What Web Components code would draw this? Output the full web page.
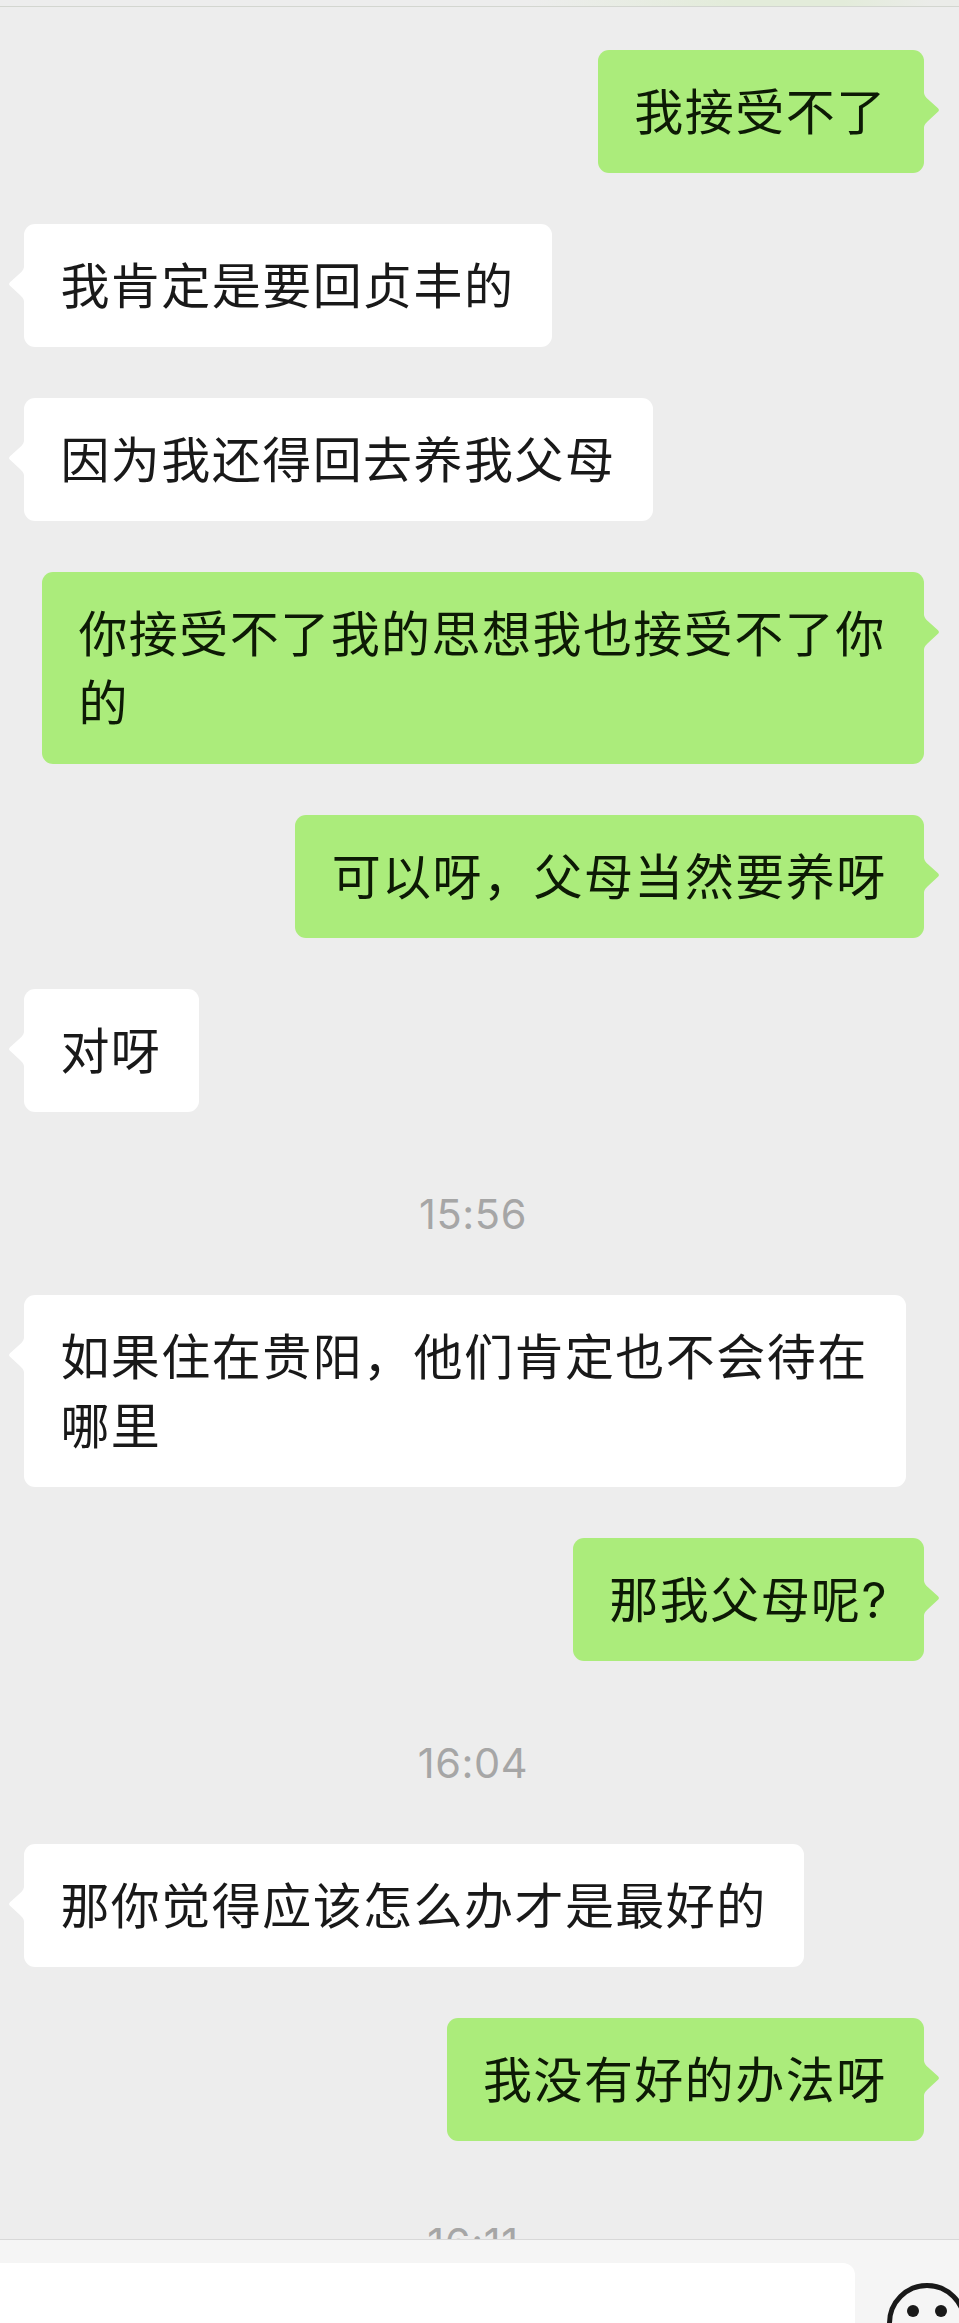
<!DOCTYPE html>
<html lang="zh-CN">
<head>
    <meta charset="UTF-8">
    <meta name="viewport" content="width=device-width, initial-scale=1.0">
    <title>聊天</title>
    <style>
        html,
        body {
            margin: 0;
            padding: 0;
            height: 100%;
            overflow: hidden;
        }

        body {
            font-family: "Noto Sans CJK SC", sans-serif;
            background-color: #ededed;
        }
    </style>
</head>
<body>
    <chat-app></chat-app>

    <script>
        class ChatBubble extends HTMLElement {
            constructor() {
                super();
                this.shadowDOM = this.attachShadow({ mode: "open" });
            }

            connectedCallback() {
                this.render();
            }

            render() {
                this.shadowDOM.innerHTML = `
                    <style>
                        :host {
                            --bubble: #ffffff;
                            position: relative;
                            box-sizing: border-box;
                            align-self: flex-start;
                            max-width: 882px;
                            padding: 24px 37.4px 30px 36.4px;
                            border-radius: 11px;
                            background-color: var(--bubble);
                            color: #191919;
                            font-size: 49px;
                            letter-spacing: 1.45px;
                            line-height: 69px;
                        }

                        :host([mine]) {
                            --bubble: #abec7b;
                            align-self: flex-end;
                            color: #0d1a05;
                        }

                        p {
                            margin: 0;
                        }

                        ::slotted(span) {
                            font-family: Inter, sans-serif;
                            line-height: 1;
                            letter-spacing: 0;
                        }

                        svg {
                            position: absolute;
                            top: 43px;
                            right: 100%;
                            width: 15px;
                            height: 34px;
                            fill: var(--bubble);
                            transform: scaleX(-1);
                        }

                        :host([mine]) svg {
                            right: auto;
                            left: 100%;
                            transform: none;
                        }
                    </style>
                    <p><slot></slot></p>
                    <svg viewBox="0 0 15 34">
                        <path d="M0 0C.5 3 2 4.500 4 6.300L14 15.200Q15.800 17 14 18.800L4 28C2 30 .5 31.500 0 34Z"/>
                    </svg>`;
            }
        }

        class ChatTime extends HTMLElement {
            constructor() {
                super();
                this.shadowDOM = this.attachShadow({ mode: "open" });
            }

            connectedCallback() {
                this.shadowDOM.innerHTML = `
                    <style>
                        :host {
                            display: block;
                            flex: none;
                            box-sizing: border-box;
                            height: 81px;
                            padding: 21px 0 0;
                            text-align: center;
                            color: #a6a6a6;
                            font-family: Inter, sans-serif;
                            font-size: 41.5px;
                            letter-spacing: 0.6px;
                            line-height: 60px;
                        }
                    </style>
                    <slot></slot>`;
            }
        }

        class ChatInput extends HTMLElement {
            constructor() {
                super();
                this.shadowDOM = this.attachShadow({ mode: "open" });
            }

            connectedCallback() {
                this.shadowDOM.innerHTML = `
                    <style>
                        :host {
                            display: flex;
                            flex: none;
                            gap: 32px;
                            box-sizing: border-box;
                            height: 84px;
                            padding-top: 23px;
                            border-top: 1px solid #d8d8d8;
                            background-color: #f5f5f5;
                            overflow: hidden;
                        }

                        .field {
                            flex: none;
                            width: 855px;
                            height: 110px;
                            border-radius: 0 12px 12px 0;
                            background-color: white;
                        }

                        svg {
                            flex: none;
                            width: 80px;
                            height: 80px;
                            margin-top: 20px;
                        }
                    </style>
                    <div class="field"></div>
                    <svg viewBox="0 0 80 80" fill="#191919">
                        <circle cx="40" cy="40" r="37.500" fill="none" stroke="#191919" stroke-width="5"/>
                        <circle cx="26" cy="28" r="6"/>
                        <circle cx="54" cy="28" r="6"/>
                        <path d="M22 46h36a18 18 0 0 1-36 0z" fill="none" stroke="#191919" stroke-width="5"/>
                    </svg>`;
            }
        }

        class ChatApp extends HTMLElement {
            constructor() {
                super();
                this.shadowDOM = this.attachShadow({ mode: "open" });
            }

            connectedCallback() {
                this.shadowDOM.innerHTML = `
                    <style>
                        :host {
                            display: flex;
                            flex-direction: column;
                            height: 100vh;
                        }

                        header {
                            flex: none;
                            box-sizing: border-box;
                            height: 7px;
                            border-bottom: 1px solid #d3d6d0;
                            background: linear-gradient(90deg, #ededed 55%, #e3ecda 76%, #e3ecda 88%, #ebece9 97%);
                        }

                        main {
                            display: flex;
                            flex: 1;
                            flex-direction: column;
                            gap: 51px;
                            min-height: 0;
                            padding: 43px 35px 0 24px;
                            overflow: hidden;
                        }

                        chat-time {
                            margin-right: 2px;
                        }
                    </style>
                    <header></header>
                    <main>
                        <chat-bubble mine>我接受不了</chat-bubble>
                        <chat-bubble>我肯定是要回贞丰的</chat-bubble>
                        <chat-bubble>因为我还得回去养我父母</chat-bubble>
                        <chat-bubble mine>你接受不了我的思想我也接受不了你的</chat-bubble>
                        <chat-bubble mine>可以呀，父母当然要养呀</chat-bubble>
                        <chat-bubble>对呀</chat-bubble>
                        <chat-time>15:56</chat-time>
                        <chat-bubble>如果住在贵阳，他们肯定也不会待在哪里</chat-bubble>
                        <chat-bubble mine>那我父母呢<span>?</span></chat-bubble>
                        <chat-time>16:04</chat-time>
                        <chat-bubble>那你觉得应该怎么办才是最好的</chat-bubble>
                        <chat-bubble mine>我没有好的办法呀</chat-bubble>
                        <chat-time>16:11</chat-time>
                    </main>
                    <chat-input></chat-input>`;
            }
        }

        customElements.define("chat-bubble", ChatBubble);
        customElements.define("chat-time", ChatTime);
        customElements.define("chat-input", ChatInput);
        customElements.define("chat-app", ChatApp);
    </script>
</body>
</html>
